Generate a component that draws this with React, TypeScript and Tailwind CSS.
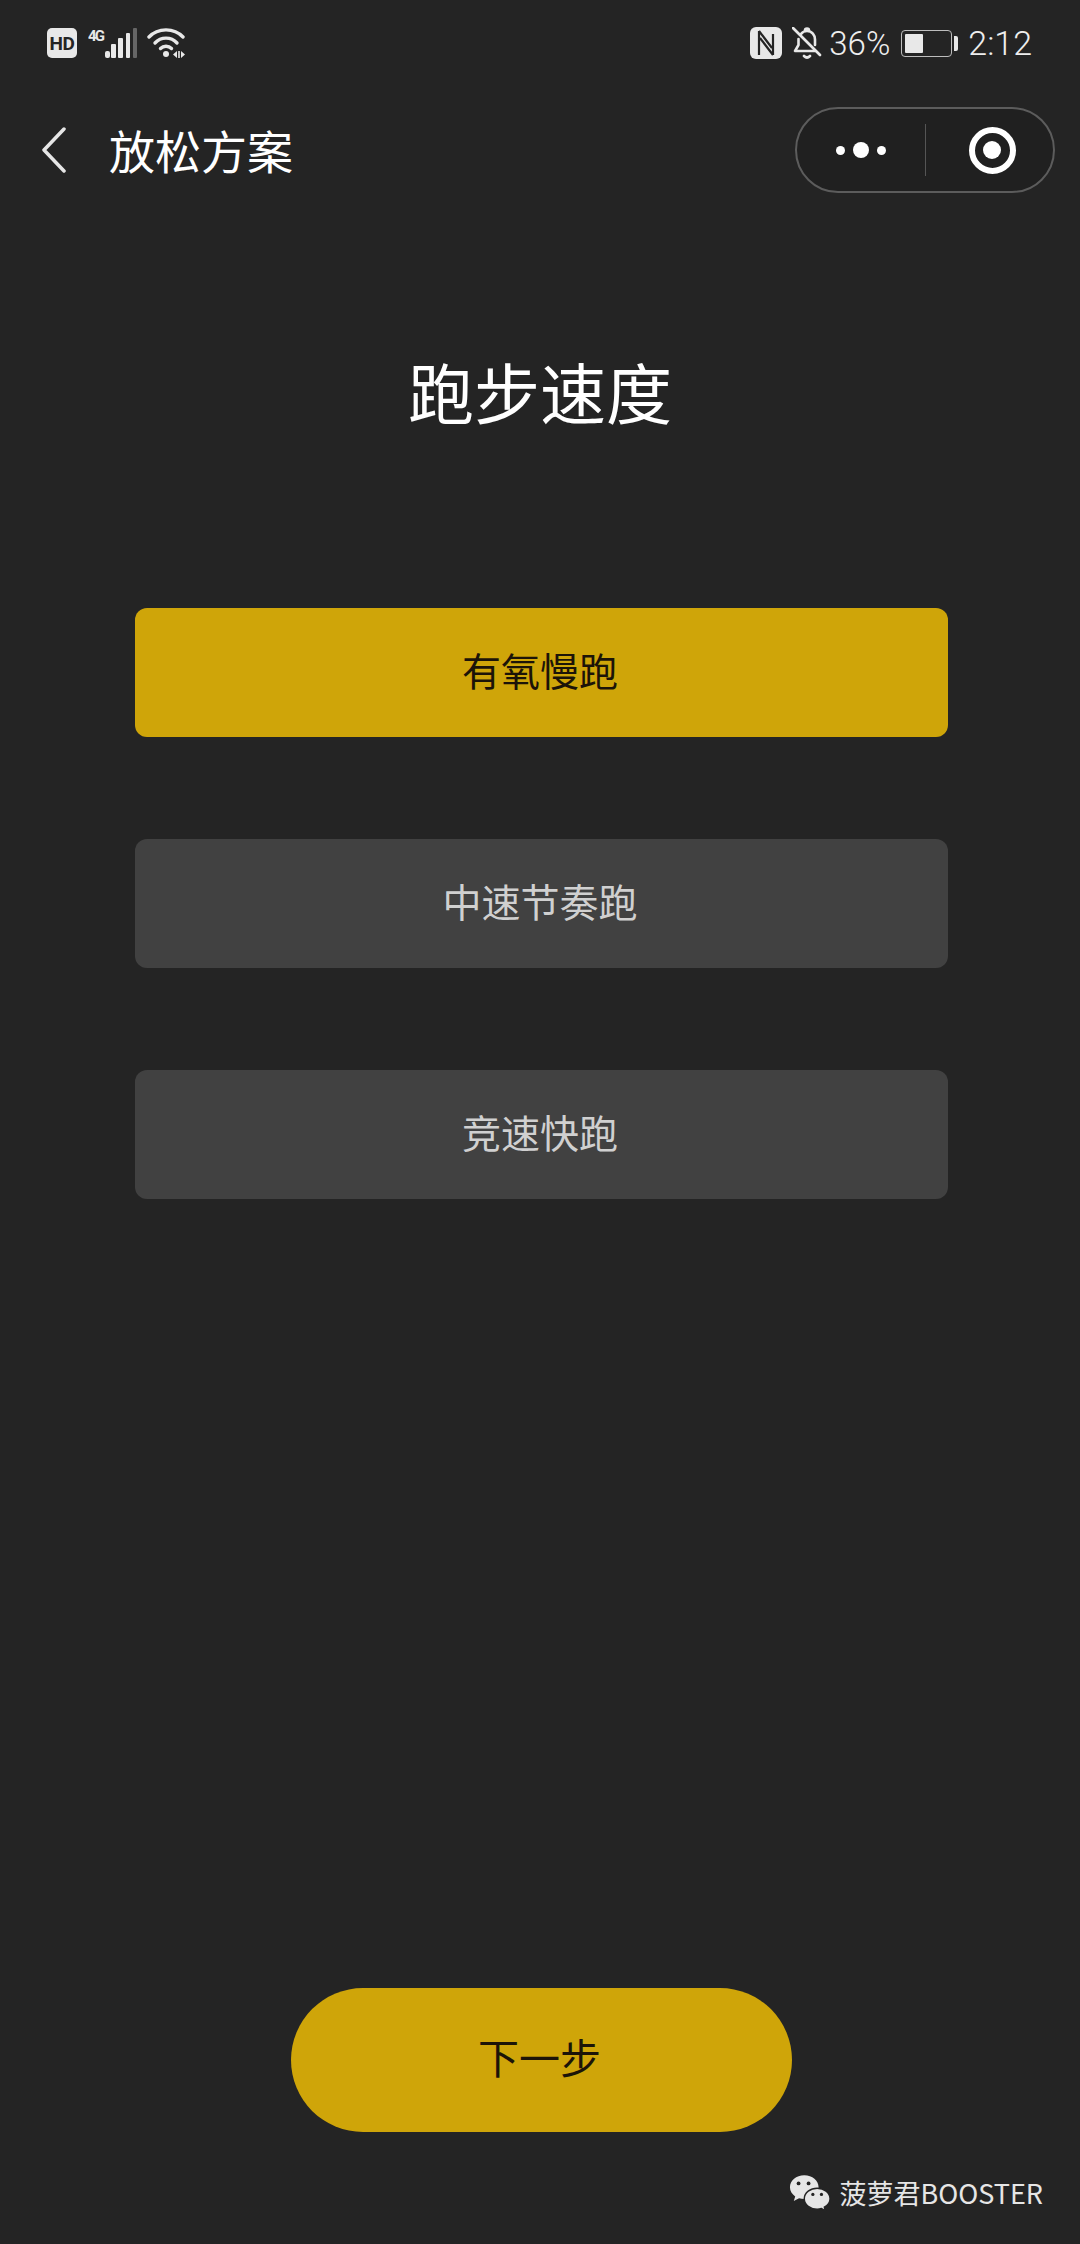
const CJK = "font-['Noto_Sans_CJK_SC','Noto_Sans',sans-serif]";

function StatusLeft() {
  return (
    <div className="flex items-center">
      <div className="flex h-[30px] w-[30px] items-center justify-center rounded-[5px] bg-[#e8e8e8] font-['Roboto',sans-serif] text-[19px] font-bold leading-none tracking-[-0.5px] text-[#242424]">
        HD
      </div>
      <svg width="50" height="31" viewBox="0 0 50 31" className="ml-[11px]" fill="#e8e8e8">
        <text x="0" y="13" fontFamily="Roboto" fontWeight="700" fontSize="15" textLength="17">4G</text>
        <rect x="17" y="23" width="5" height="7" rx="2" />
        <rect x="23" y="16" width="5" height="14" rx="1" />
        <rect x="30" y="10" width="5" height="20" rx="1" />
        <rect x="38" y="5" width="4" height="25" rx="1" />
        <rect x="45" y="0" width="4" height="30" fill="#666" rx="1" />
      </svg>
      <svg width="38" height="30" viewBox="0 0 38 30" className="ml-[9px]" fill="none" stroke="#e8e8e8" strokeWidth="3.400" strokeLinecap="round">
        <path d="M2 9C11 -0.500 27 -0.500 36 9" />
        <path d="M8 15C14 8.500 24 8.500 30 15" />
        <path d="M13.500 20.500C16.500 17.500 21.500 17.500 24.500 20.500" />
        <circle cx="19" cy="26" r="3" fill="#e8e8e8" stroke="none" />
        <path d="M26 26.500l4-3.500v7zM31.200 23h1.600v7h-1.600zM34 23l4 3.500-4 3.500z" fill="#e8e8e8" stroke="none" />
      </svg>
    </div>
  );
}

function StatusRight() {
  return (
    <div className="flex items-center">
      <svg width="32" height="32" viewBox="0 0 32 32" className="ml-[1px]">
        <rect width="32" height="32" rx="6" fill="#e8e8e8" />
        <path d="M9 4v24M9 4l13 17M23 28V7M23 28L10 11" fill="none" stroke="#242424" strokeWidth="2.200" />
      </svg>
      <svg width="30" height="32" viewBox="0 0 30 32" className="ml-[10px]" fill="none" stroke="#e8e8e8" strokeWidth="2.600" strokeLinecap="round" strokeLinejoin="round">
        <path d="M9 7c1.500-2 3.500-3 6-3 5 0 8 4 8 8.500v5.500M6.500 12v6L3 24h20" />
        <path d="M13 3.500C13 1 17 1 17 3.500" />
        <path d="M1 1l27 27" />
        <path d="M12 29c2 2 4 2 6 0" />
      </svg>
      <span className="ml-[7px] font-['Roboto',sans-serif] text-[33px] font-light leading-none text-[#eeeeee]">36%</span>
      <div className="ml-[11px] flex h-[27px] w-[51px] items-center rounded-[4px] border border-[#bdbdbd] p-[3px]">
        <div className="h-full w-[18px] rounded-[1px] bg-[#e8e8e8]" />
      </div>
      <div className="ml-[2px] h-[15px] w-[4px] rounded-r-[2px] bg-[#e8e8e8]" />
      <span className="ml-[10px] font-['Roboto',sans-serif] text-[34px] font-light leading-none text-[#eeeeee]">2:12</span>
    </div>
  );
}

function Capsule() {
  return (
    <div className="flex h-[86px] w-[260px] items-center rounded-full border-2 border-[#5c5c5c] bg-[#202020]">
      <div className="flex h-full w-[128px] items-center justify-center gap-[8px]">
        <div className="h-[9px] w-[9px] rounded-full bg-white" />
        <div className="h-[16px] w-[16px] rounded-full bg-white" />
        <div className="h-[9px] w-[9px] rounded-full bg-white" />
      </div>
      <div className="h-[52px] w-px bg-[#555555]" />
      <div className="flex flex-1 items-center justify-center pl-[5px]">
        <div className="flex h-[47px] w-[47px] items-center justify-center rounded-full border-[6px] border-white">
          <div className="h-[18px] w-[18px] rounded-full bg-white" />
        </div>
      </div>
    </div>
  );
}

function WeChatLogo() {
  return (
    <svg width="42" height="37" viewBox="0 0 44 38">
      <path d="M16 1C7.500 1 1 6.500 1 13.500c0 4 2.200 7.300 5.500 9.600L5 28l5.500-3c1.800.5 3.600.8 5.500.8C24.500 25.800 31 20.300 31 13.500S24.500 1 16 1z" fill="#e6e6e6" />
      <circle cx="10" cy="9.500" r="2" fill="#242424" />
      <circle cx="20.500" cy="9.500" r="2" fill="#242424" />
      <path d="M29.500 14.500C22.500 14.500 16 19 16 25.500S22.500 36.500 29.500 36.500c1.500 0 3-.2 4.500-.7l4 2.200-1-3.700C40.500 32.500 43 29.300 43 25.500 43 19 36.500 14.500 29.500 14.500z" fill="#e6e6e6" stroke="#242424" strokeWidth="1.500" />
      <circle cx="25" cy="21" r="1.700" fill="#242424" />
      <circle cx="34" cy="21" r="1.700" fill="#242424" />
    </svg>
  );
}

const options = [
  { label: "有氧慢跑", active: true },
  { label: "中速节奏跑", active: false },
  { label: "竞速快跑", active: false },
];

export default function App() {
  return (
    <div className={`relative flex h-[2244px] w-[1080px] flex-col overflow-hidden bg-[#242424] ${CJK}`}>
      <div className="flex h-[86px] items-center justify-between pl-[47px] pr-[48px]">
        <StatusLeft />
        <StatusRight />
      </div>

      <div className="mt-[20px] flex h-[88px] items-center justify-between pl-[41px] pr-[25px]">
        <div className="flex items-center">
          <svg width="26" height="46" viewBox="0 0 26 46" fill="none" stroke="#e6e6e6" strokeWidth="3.500" strokeLinecap="round" strokeLinejoin="round">
            <path d="M23 2L3 23l20 21" />
          </svg>
          <h2 className="ml-[42px] pb-[2px] text-[46px] font-normal leading-none text-white">放松方案</h2>
        </div>
        <Capsule />
      </div>

      <h1 className="mt-[151px] text-center text-[66px] font-normal leading-[90px] text-white">跑步速度</h1>

      <div className="mt-[173px] flex flex-col gap-[102px] pl-[135px] pr-[132px]">
        {options.map((o) => (
          <div
            key={o.label}
            className={`flex h-[129px] items-center justify-center rounded-[12px] pr-[3px] pb-[6px] text-[39px] leading-none ${
              o.active ? "bg-[#cfa509] text-[#1c1408]" : "bg-[#414141] text-[#d0d0d0]"
            }`}
          >
            {o.label}
          </div>
        ))}
      </div>

      <div className="mt-auto mb-[112px] flex justify-center pl-[2px]">
        <div className="flex h-[144px] w-[501px] items-center justify-center rounded-full bg-[#cfa509] pb-[8px] pr-[3px] text-[41px] leading-none text-[#1c1408]">
          下一步
        </div>
      </div>

      <div className="absolute bottom-[33px] right-[37px] flex items-center gap-[8px] text-[27px] leading-none text-[#e6e6e6]">
        <WeChatLogo />
        <span>菠萝君BOOSTER</span>
      </div>
    </div>
  );
}
